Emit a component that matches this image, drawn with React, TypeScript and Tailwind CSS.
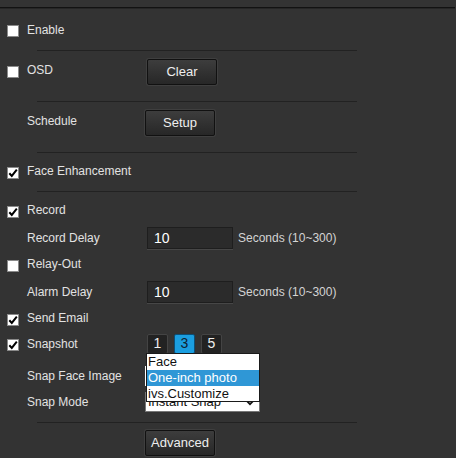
import type { ReactNode } from "react";

const font = { fontFamily: '"Liberation Sans", Arial, sans-serif' };

function Check({ on }: { on?: boolean }) {
  return (
    <span className="mt-[3px] flex h-[12px] w-[12px] shrink-0 items-center justify-center border border-[#8a8a8a] bg-white">
      {on ? (
        <svg width="10" height="10" viewBox="0 0 10 10">
          <path d="M1.3 5.2 L3.8 7.9 L8.8 1.6" fill="none" stroke="#000" strokeWidth="2" />
        </svg>
      ) : null}
    </span>
  );
}

function Btn({ children, className = "" }: { children: ReactNode; className?: string }) {
  return (
    <button
      type="button"
      className={`flex h-[26px] w-[70px] items-center justify-center rounded-[2px] border border-[#111] bg-gradient-to-b from-[#3d3d3d] to-[#272727] text-[13px] text-[#eeeeee] shadow-[0_0_0_1px_#3f3f3f] ${className}`}
    >
      {children}
    </button>
  );
}

function Row({ h, mt, check, label, children }: { h: string; mt: string; check?: "on" | "off"; label: string; children?: ReactNode }) {
  return (
    <div className={`flex items-center ${h} ${mt}`}>
      <div className="flex w-[27px] shrink-0 justify-start pl-[7px]">{check ? <Check on={check === "on"} /> : null}</div>
      <span className="w-[118px] shrink-0 text-[12px] text-[#e2e2e2]">{label}</span>
      {children}
    </div>
  );
}

function Divider({ mt }: { mt: string }) {
  return <div className={`ml-[37px] h-px w-[320px] bg-[#222222] ${mt}`} />;
}

function DelayInput() {
  return (
    <div className="ml-[2px] flex items-center">
      <div className="flex h-[22px] w-[86px] items-center border border-[#1e1e1e] bg-[#2b2b2b] pl-[6px] text-[14px] text-white shadow-[0_1px_0_#474747]">
        10
      </div>
      <span className="ml-[5px] text-[12px] text-[#d4d4d4]">Seconds (10~300)</span>
    </div>
  );
}

function NumBtn({ n, active }: { n: string; active?: boolean }) {
  return (
    <div
      className={`flex h-[20px] w-[21px] items-center justify-center rounded-[2px] border text-[14px] ${
        active ? "border-[#0b4f78] bg-[#1b9ee0] text-[#0f2233]" : "border-[#444] bg-[#222] text-[#eeeeee]"
      }`}
    >
      {n}
    </div>
  );
}

export default function App() {
  return (
    <main className="h-[458px] w-[456px] overflow-hidden bg-[#333333]" style={font}>
      <div className="h-[7px]" />
      <div className="h-px w-[455px] bg-[#121212]" />
      <div className="h-px w-[455px] bg-[#262626]" />

      <Row h="h-[41px]" mt="mt-0" check="off" label="Enable" />
      <Divider mt="mt-0" />

      <Row h="h-[38px]" mt="mt-0" check="off" label="OSD">
        <Btn className="ml-[2px] mt-[3px]">Clear</Btn>
      </Row>
      <Divider mt="mt-[12px]" />

      <Row h="h-[38px]" mt="mt-0" label="Schedule">
        <Btn className="mt-[3px]">Setup</Btn>
      </Row>
      <Divider mt="mt-[12px]" />

      <Row h="h-[36px]" mt="mt-0" check="on" label="Face Enhancement" />
      <Divider mt="mt-[2px]" />

      <Row h="h-[24px]" mt="mt-[6px]" check="on" label="Record" />
      <Row h="h-[24px]" mt="mt-[4px]" label="Record Delay">
        <DelayInput />
      </Row>
      <Row h="h-[24px]" mt="mt-[2px]" check="off" label="Relay-Out" />
      <Row h="h-[24px]" mt="mt-[4px]" label="Alarm Delay">
        <DelayInput />
      </Row>
      <Row h="h-[24px]" mt="mt-[2px]" check="on" label="Send Email" />
      <Row h="h-[21px]" mt="mt-[3px]" check="on" label="Snapshot">
        <div className="ml-[2px] flex gap-[6px]">
          <NumBtn n="1" />
          <NumBtn n="3" active />
          <NumBtn n="5" />
        </div>
      </Row>

      <div className="relative pt-[10px]">
        <Row h="h-[24px]" mt="mt-0" label="Snap Face Image">
          <div className="flex h-[20px] w-[115px] items-center bg-white pl-[2px] text-[13px] text-[#111]">One-inch photo</div>
        </Row>
        <Row h="h-[24px]" mt="mt-[2px]" label="Snap Mode">
          <div className="flex h-[20px] w-[115px] items-center justify-between border border-[#777] bg-white pl-[2px] pr-[4px] text-[13px] text-[#111]">
            <span>Instant Snap</span>
            <svg width="10" height="7" viewBox="0 0 10 7">
              <path d="M1 1.2 L5 5.2 L9 1.2" fill="none" stroke="#111" strokeWidth="1.8" />
            </svg>
          </div>
        </Row>

        <div className="absolute left-[146px] top-[-1px] flex w-[114px] flex-col border border-[#1a1a1a] bg-white text-[13px] leading-[15px] text-[#111]">
          <span className="h-[16px] pl-[1px]">Face</span>
          <span className="h-[16px] bg-[#2f97d6] pl-[1px] text-white">One-inch photo</span>
          <span className="h-[15px] pl-[1px]">ivs.Customize</span>
        </div>
      </div>

      <Divider mt="mt-[8px]" />
      <div className="ml-[145px] mt-[7px]">
        <Btn>Advanced</Btn>
      </div>
    </main>
  );
}
